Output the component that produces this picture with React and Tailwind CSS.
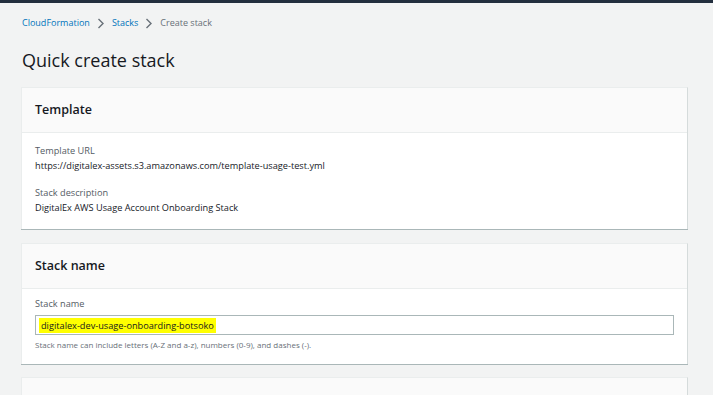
import React from 'react';

const Chevron = () => (
  <svg width="8" height="11" viewBox="0 0 8 11" className="mx-[7px]">
    <path d="M1.5 1 L6 5.5 L1.5 10" fill="none" stroke="#687078" strokeWidth="1.4" />
  </svg>
);

const Card = ({ title, children, className = '' }) => (
  <div className={`bg-white border-t border-l border-[#eaeded] border-r border-r-[#d5dbdb] shadow-[0_1px_0_0_#aab7b8] ${className}`}>
    <div className="bg-[#fafafa] border-b border-[#eaeded] px-[13px] h-[45px] flex items-center">
      <h2 className="text-[12.5px] font-semibold text-[#16191f]">{title}</h2>
    </div>
    {children}
  </div>
);

export default function App() {
  return (
    <div className="w-[713px] h-[395px] overflow-hidden bg-[#f2f3f3] font-['Open_Sans',sans-serif] text-[#16191f]">
      <div className="h-[3px] bg-[#232f3e]" />
      <div className="px-[21px] pr-[25px]">
        <nav className="flex items-center text-[9px] h-[16px] mt-[12px] pl-[1px]">
          <span className="text-[#0073bb]">CloudFormation</span>
          <Chevron />
          <span className="text-[#0073bb]">Stacks</span>
          <Chevron />
          <span className="text-[#687078]">Create stack</span>
        </nav>
        <h1 className="text-[18px] leading-[24px] mt-[17px] mb-[15px] pl-[1px] font-normal">Quick create stack</h1>

        <Card title="Template">
          <div className="px-[13px] pt-[10px] pb-[14px] text-[9.2px] leading-[15px]">
            <div className="text-[#545b64]">Template URL</div>
            <div>https://digitalex-assets.s3.amazonaws.com/template-usage-test.yml</div>
            <div className="text-[#545b64] mt-[12px]">Stack description</div>
            <div>DigitalEx AWS Usage Account Onboarding Stack</div>
          </div>
        </Card>

        <Card title="Stack name" className="mt-[14px]">
          <div className="px-[13px] pt-[7px] pb-[13px] text-[9.2px]">
            <div className="text-[#545b64] leading-[15px]">Stack name</div>
            <div className="mt-[4px] h-[20px] border border-[#aab7b8] flex items-center px-[3px]">
              <span className="bg-[#ffff00] px-[2px] text-[9.2px] leading-[15px]">digitalex-dev-usage-onboarding-botsoko</span>
            </div>
            <div className="text-[#687078] text-[8px] leading-[12px] mt-[4px]">
              Stack name can include letters (A-Z and a-z), numbers (0-9), and dashes (-).
            </div>
          </div>
        </Card>

        <Card title="Parameters" className="mt-[13px]" />
      </div>
    </div>
  );
}
